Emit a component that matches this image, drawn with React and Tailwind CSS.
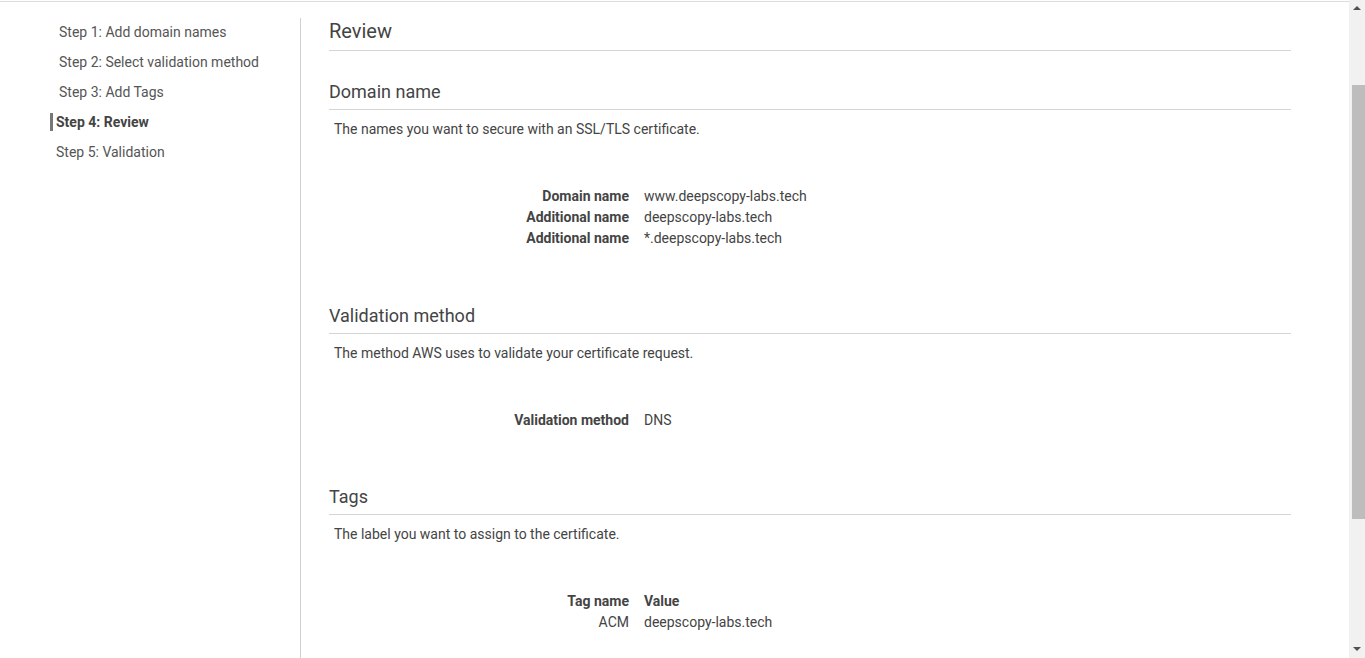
import React from "react";

const font = { fontFamily: "Roboto, 'Noto Sans', Arial, sans-serif" };

function KV({ rows, header }) {
  return (
    <div className="flex flex-col text-[14px] leading-[21px] text-[#444]">
      {header && (
        <div className="flex">
          <div className="w-[300px] text-right font-bold">{header[0]}</div>
          <div className="pl-[15px] font-bold">{header[1]}</div>
        </div>
      )}
      {rows.map(([k, v, bold], i) => (
        <div className="flex" key={i}>
          <div className={"w-[300px] text-right " + (bold ? "font-bold" : "")}>{k}</div>
          <div className="pl-[15px]">{v}</div>
        </div>
      ))}
    </div>
  );
}

function Section({ title, desc, mt, children }) {
  return (
    <div className={mt}>
      <h2 className="text-[18px] leading-[24px] text-[#444] pb-[5px] border-b border-[#d5d5d5]">{title}</h2>
      <p className="mt-[9px] pl-[5px] text-[14px] leading-[20px] text-[#444]">{desc}</p>
      <div className="mt-[47px]">{children}</div>
    </div>
  );
}

export default function App() {
  return (
    <div className="flex h-[658px] w-full overflow-hidden bg-white" style={font}>
      <div className="flex-1 flex flex-col">
        <div className="h-[1px] mt-[1px] bg-[#dcdcdc]" />
        <div className="flex flex-1">
          <div className="w-[300px] pt-[15px] pl-[50px] text-[14px]">
            <div className="leading-[30px] pl-[9px] text-[#555]">Step 1: Add domain names</div>
            <div className="leading-[30px] pl-[9px] text-[#555]">Step 2: Select validation method</div>
            <div className="leading-[30px] pl-[9px] text-[#555]">Step 3: Add Tags</div>
            <div className="h-[30px] flex items-center">
              <div className="w-[3px] h-[18px] bg-[#777]" />
              <div className="pl-[3px] font-bold text-[#444]">Step 4: Review</div>
            </div>
            <div className="leading-[30px] pl-[6px] text-[#555]">Step 5: Validation</div>
          </div>
          <div className="flex flex-col flex-1">
            <div className="mt-[16px] flex-1 border-l border-[#d0d0d0] pl-[28px] pr-[58px]">
              <h1 className="mt-[-1px] text-[20px] leading-[28px] text-[#444] pb-[5px] border-b border-[#d5d5d5]">Review</h1>
              <Section
                mt="mt-[29px]"
                title="Domain name"
                desc="The names you want to secure with an SSL/TLS certificate."
              >
                <KV
                  rows={[
                    ["Domain name", "www.deepscopy-labs.tech", true],
                    ["Additional name", "deepscopy-labs.tech", true],
                    ["Additional name", "*.deepscopy-labs.tech", true],
                  ]}
                />
              </Section>
              <Section
                mt="mt-[55px]"
                title="Validation method"
                desc="The method AWS uses to validate your certificate request."
              >
                <KV rows={[["Validation method", "DNS", true]]} />
              </Section>
              <Section
                mt="mt-[54px]"
                title="Tags"
                desc="The label you want to assign to the certificate."
              >
                <KV header={["Tag name", "Value"]} rows={[["ACM", "deepscopy-labs.tech", false]]} />
              </Section>
            </div>
          </div>
        </div>
      </div>
      <div className="w-[16px] h-[658px] bg-[#f1f1f1] flex flex-col items-center">
        <div className="h-[17px] w-full flex items-center justify-center">
          <svg width="8" height="5" viewBox="0 0 8 5"><path d="M4 0 L8 4 L0 4 Z" fill="#505050" /></svg>
        </div>
        <div className="mt-[68px] h-[434px] w-[13px] ml-[3px] bg-[#bdbdbd]" />
        <div className="flex-1" />
        <div className="h-[17px] w-full flex items-center justify-center">
          <svg width="8" height="5" viewBox="0 0 8 5"><path d="M0 0 L8 0 L4 4 Z" fill="#505050" /></svg>
        </div>
      </div>
    </div>
  );
}
